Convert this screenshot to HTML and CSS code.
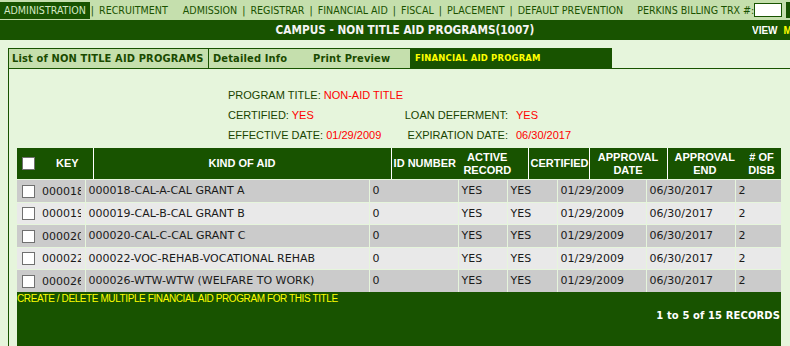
FILE: index.html
```html
<!DOCTYPE html>
<html lang="en">
<head>
    <meta charset="UTF-8">
    <title>Campus - Non Title Aid Programs</title>
    <link rel="stylesheet" href="styles.css">
</head>
<body>
    <div class="topnav">
        <a class="nav-item active">ADMINISTRATION</a><span class="sep">|</span>
        <a class="nav-item">RECRUITMENT</a>
        <a class="nav-item gap">ADMISSION</a><span class="sep">|</span>
        <a class="nav-item">REGISTRAR</a><span class="sep">|</span>
        <a class="nav-item">FINANCIAL AID</a><span class="sep">|</span>
        <a class="nav-item">FISCAL</a><span class="sep">|</span>
        <a class="nav-item">PLACEMENT</a><span class="sep">|</span>
        <a class="nav-item">DEFAULT PREVENTION</a>
        <span class="nav-item trx">PERKINS BILLING TRX #:</span><input class="trx-input" type="text"><span class="trx-go"></span>
    </div>

    <div class="titlebar">
        <div class="title">CAMPUS - NON TITLE AID PROGRAMS(1007)</div>
        <div class="view-links"><span class="view">VIEW</span><span class="mode">M</span></div>
    </div>

    <div class="panel">
        <div class="tabs">
            <div class="tab-group">
                <a class="tab tab-list">List of NON TITLE AID PROGRAMS</a>
                <a class="tab tab-detail">Detailed Info</a>
                <a class="tab tab-print">Print Preview</a>
            </div>
            <a class="tab tab-active">FINANCIAL AID PROGRAM</a>
        </div>

        <div class="content">
            <div class="info">
                <div class="info-row full"><span class="lbl">PROGRAM TITLE:</span> <span class="val">NON-AID TITLE</span></div>
                <div class="info-cell"><span class="lbl">CERTIFIED:</span> <span class="val">YES</span></div>
                <div class="info-lbl2"><span class="lbl">LOAN DEFERMENT:</span></div>
                <div class="info-val2"><span class="val">YES</span></div>
                <div class="info-cell"><span class="lbl">EFFECTIVE DATE:</span> <span class="val">01/29/2009</span></div>
                <div class="info-lbl2"><span class="lbl">EXPIRATION DATE:</span></div>
                <div class="info-val2"><span class="val">06/30/2017</span></div>
            </div>

            <table class="grid-head">
                <colgroup>
                    <col style="width:76px"><col style="width:298px"><col style="width:67px"><col style="width:70px">
                    <col style="width:61px"><col style="width:78px"><col style="width:75px"><col style="width:39px">
                </colgroup>
                <tr>
                    <th class="h-key line"><span class="chk"></span><span class="key-lbl">KEY</span></th>
                    <th class="line">KIND OF AID</th>
                    <th>ID NUMBER</th>
                    <th class="line h-active">ACTIVE<br>RECORD</th>
                    <th class="line h-left">CERTIFIED</th>
                    <th class="line">APPROVAL<br>DATE</th>
                    <th>APPROVAL<br>END</th>
                    <th># OF<br>DISB</th>
                </tr>
            </table>

            <table class="grid-body">
                <colgroup>
                    <col style="width:68px"><col style="width:284px"><col style="width:89px"><col style="width:49px">
                    <col style="width:50px"><col style="width:89px"><col style="width:89px"><col style="width:46px">
                </colgroup>
                <tr class="odd">
                    <td class="c-key"><span class="chk"></span><span class="key">000018</span></td>
                    <td>000018-CAL-A-CAL GRANT A</td><td>0</td><td>YES</td><td>YES</td><td>01/29/2009</td><td>06/30/2017</td><td>2</td>
                </tr>
                <tr class="even">
                    <td class="c-key"><span class="chk"></span><span class="key">000019</span></td>
                    <td>000019-CAL-B-CAL GRANT B</td><td>0</td><td>YES</td><td>YES</td><td>01/29/2009</td><td>06/30/2017</td><td>2</td>
                </tr>
                <tr class="odd">
                    <td class="c-key"><span class="chk"></span><span class="key">000020</span></td>
                    <td>000020-CAL-C-CAL GRANT C</td><td>0</td><td>YES</td><td>YES</td><td>01/29/2009</td><td>06/30/2017</td><td>2</td>
                </tr>
                <tr class="even">
                    <td class="c-key"><span class="chk"></span><span class="key">000022</span></td>
                    <td>000022-VOC-REHAB-VOCATIONAL REHAB</td><td>0</td><td>YES</td><td>YES</td><td>01/29/2009</td><td>06/30/2017</td><td>2</td>
                </tr>
                <tr class="odd">
                    <td class="c-key"><span class="chk"></span><span class="key">000026</span></td>
                    <td>000026-WTW-WTW (WELFARE TO WORK)</td><td>0</td><td>YES</td><td>YES</td><td>01/29/2009</td><td>06/30/2017</td><td>2</td>
                </tr>
            </table>

            <div class="grid-foot">
                <a class="create-link">CREATE / DELETE MULTIPLE FINANCIAL AID PROGRAM FOR THIS TITLE</a>
                <div class="records">1 to 5 of 15 RECORDS</div>
            </div>
        </div>
    </div>
</body>
</html>
```

FILE: styles.css
```css
body {
    margin: 0;
    background: #e6f5dc;
    font-family: "DejaVu Sans", Verdana, sans-serif;
    width: 790px;
    height: 346px;
    overflow: hidden;
}

/* top navigation */
.topnav {
    display: flex;
    align-items: center;
    height: 20px;
    background: #c5dfad;
    white-space: nowrap;
    font-size: 10.6px;
    font-stretch: condensed;
    color: #1a5200;
    overflow: hidden;
}

.topnav > * {
    flex: none;
}

.nav-item {
    padding: 0 4px;
    line-height: 17px;
}

.nav-item.active {
    background: #185300;
    color: #d4e8c4;
}

.nav-item.gap {
    margin-left: 7px;
}

.sep {
    margin: 0 1px;
    color: #1a5200;
}

.trx {
    margin-left: 6px;
    padding-right: 0;
}

.trx-input {
    width: 26px;
    height: 12px;
    padding: 0;
    border: 1px solid #185300;
    background: white;
}

.trx-go {
    display: inline-block;
    width: 10px;
    height: 16px;
    margin-left: 4px;
    background: #185300;
}

/* title bar */
.titlebar {
    display: flex;
    align-items: center;
    height: 20px;
    background: #185300;
    white-space: nowrap;
}

.title {
    flex: 1;
    padding-left: 58px;
    text-align: center;
    color: #f4f4f4;
    font-weight: bold;
    font-size: 11.7px;
    font-stretch: condensed;
}

.view-links {
    width: 38px;
    overflow: hidden;
    font-family: "Liberation Sans", Arial, sans-serif;
    font-weight: bold;
    font-size: 10px;
}

.view {
    color: white;
    margin-right: 6px;
}

.mode {
    color: #ffff00;
}

/* panel with tabs */
.panel {
    margin: 8px 0 0 8px;
    border-left: 1px solid #185300;
    height: 400px;
}

.tabs {
    display: flex;
    height: 20px;
    border-bottom: 1px solid #185300;
    white-space: nowrap;
    font-size: 11px;
    font-weight: bold;
    font-stretch: condensed;
    letter-spacing: 0.15px;
}

.tab-group {
    display: flex;
    width: 401px;
    background: #c5dfad;
    border-top: 1px solid #185300;
    color: #1a4a00;
}

.tab {
    line-height: 19px;
}

.tab-list {
    width: 196px;
    padding-left: 3px;
    border-right: 1px solid #185300;
}

.tab-detail {
    width: 95px;
    padding-left: 4px;
}

.tab-print {
    padding-left: 5px;
}

.tab-active {
    width: 197px;
    padding-left: 5px;
    background: #185300;
    color: #ffff00;
    line-height: 20px;
    font-size: 9.4px;
    letter-spacing: 0.2px;
}

/* info block */
.content {
    padding: 16px 0 0 8px;
}

.info {
    display: grid;
    grid-template-columns: 175px 97px auto;
    column-gap: 8px;
    margin-left: 211px;
    font-family: "Liberation Sans", Arial, sans-serif;
    font-size: 11px;
    line-height: 20px;
    white-space: nowrap;
}

.info-row.full {
    grid-column: 1 / 4;
}

.info-lbl2 {
    display: flex;
    justify-content: flex-end;
}

.lbl {
    color: #1a4400;
}

.val {
    color: #ff0000;
}

/* grid */
table {
    border-collapse: collapse;
    table-layout: fixed;
    width: 764px;
}

.grid-head {
    margin-top: 3px;
    background: #185300;
    color: white;
    font-family: "Liberation Sans", Arial, sans-serif;
    font-size: 11px;
    font-weight: bold;
}

.grid-head th {
    height: 31px;
    padding: 0;
    line-height: 13px;
    text-align: center;
}

.grid-head th.line {
    border-right: 1px solid white;
}

.grid-head .h-active {
    padding-right: 11px;
}

.grid-head .h-left {
    text-align: left;
    padding-left: 2px;
}

.h-key {
    text-align: left !important;
}

.h-key .chk {
    vertical-align: middle;
}

.key-lbl {
    margin-left: 21px;
    vertical-align: middle;
}

.chk {
    display: inline-block;
    width: 11px;
    height: 11px;
    margin-left: 5px;
    background: white;
    border: 1px solid #707070;
}

.grid-body {
    margin-top: 1px;
    font-size: 11px;
    color: #1a1a1a;
}

.grid-body td {
    height: 21.5px;
    padding: 0 0 0 3px;
    border-right: 1px solid #e6f5dc;
    border-bottom: 1px solid #e6f5dc;
    white-space: nowrap;
    overflow: hidden;
}

.grid-body td:last-child {
    border-right: none;
}

.grid-body tr.odd td {
    background: #cbcbcb;
}

.grid-body tr.even td {
    background: #e9e9e9;
}

.grid-body td.c-key {
    padding-left: 0;
}

.c-key .chk {
    vertical-align: middle;
}

.key {
    display: inline-block;
    width: 39px;
    overflow: hidden;
    margin-left: 7px;
    vertical-align: middle;
}

.grid-foot {
    width: 764px;
    height: 80px;
    margin-top: -1px;
    background: #185300;
}

.create-link {
    display: block;
    padding-top: 1px;
    color: #ffff00;
    font-family: "Liberation Sans", Arial, sans-serif;
    font-size: 10px;
    letter-spacing: -0.4px;
    line-height: 12px;
}

.records {
    margin-top: 5px;
    text-align: right;
    padding-right: 1px;
    color: white;
    font-size: 10px;
    letter-spacing: 0.1px;
    font-weight: bold;
}
```
